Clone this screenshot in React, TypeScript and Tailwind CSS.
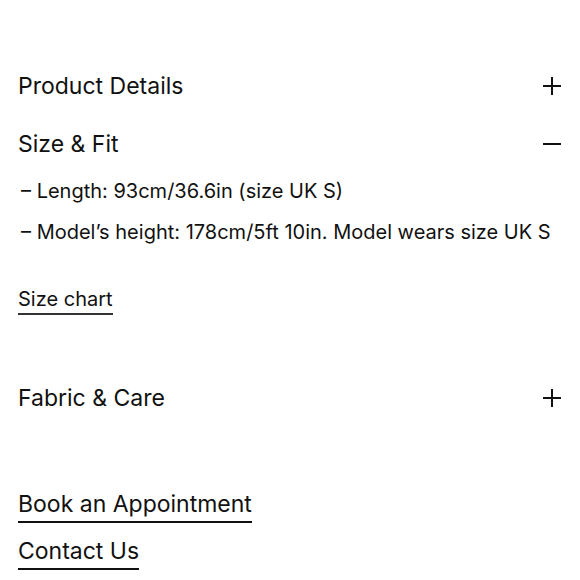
import React from 'react';

function PlusIcon() {
    return (
        <svg width="18" height="18" viewBox="0 0 18 18" fill="none" stroke="#111" strokeWidth="2">
            <path d="M0 9h18M9 0v18" />
        </svg>
    );
}

function MinusIcon() {
    return (
        <svg width="18" height="18" viewBox="0 0 18 18" fill="none" stroke="#111" strokeWidth="2">
            <path d="M0 9h18" />
        </svg>
    );
}

function SectionHeader({ title, open }: { title: string; open?: boolean }) {
    return (
        <div className="flex h-[58px] items-center justify-between">
            <span className="text-[23px] leading-none text-[#111]">{title}</span>
            <span className="mr-[1px]">{open ? <MinusIcon /> : <PlusIcon />}</span>
        </div>
    );
}

export default function App() {
    return (
        <div
            className="h-[580px] w-[580px] overflow-hidden bg-white px-[18px] pt-[57px] text-[#111]"
            style={{ fontFamily: 'Inter, "Liberation Sans", sans-serif' }}
        >
            <SectionHeader title="Product Details" />
            <SectionHeader title="Size & Fit" open />
            <div className="-mt-[3px] text-[20px]">
                <p className="flex h-[41px] items-center pl-[3px]">– Length: 93cm/36.6in (size UK S)</p>
                <p className="flex h-[41px] items-center pl-[3px]">– Model’s height: 178cm/5ft 10in. Model wears size UK S</p>
            </div>
            <div className="mt-[34px]">
                <a className="inline-block border-b-2 border-[#333] pb-[1px] text-[20px] leading-[26px]">Size chart</a>
            </div>
            <div className="mt-[54px]">
                <SectionHeader title="Fabric & Care" />
            </div>
            <div className="mt-[62px] flex flex-col items-start gap-[13px] text-[23px]">
                <a className="border-b-2 border-[#111] pb-[2px] leading-[30px]">Book an Appointment</a>
                <a className="border-b-2 border-[#111] pb-[2px] leading-[30px]">Contact Us</a>
            </div>
        </div>
    );
}
